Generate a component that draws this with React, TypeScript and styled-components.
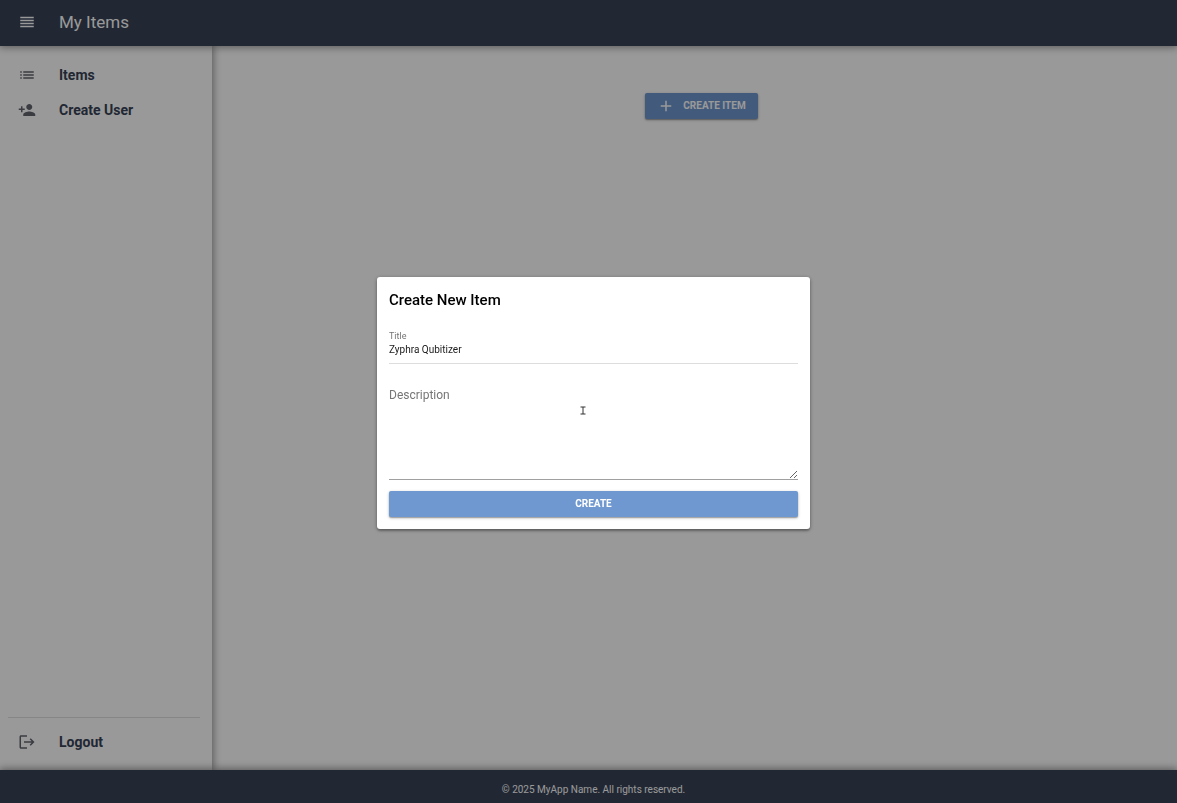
import React, { useState } from "react";
import styled, { createGlobalStyle } from "styled-components";

const GlobalStyle = createGlobalStyle`
  *, *::before, *::after { box-sizing: border-box; }
  body {
    margin: 0;
    font-family: Roboto, "Liberation Sans", sans-serif;
    font-size: 10px;
    color: #000;
    background: #fff;
  }
  button, input, textarea { font-family: inherit; }
`;

const navy = "#374256";
const blue = "#6f98d0";
const barShadow = "0 0 7px 1px rgba(0, 0, 0, 0.3), 0 0 10px rgba(0, 0, 0, 0.2)";

const Page = styled.div`
  display: flex;
  flex-direction: column;
  min-height: 100vh;
`;

const Header = styled.header`
  position: relative;
  z-index: 2;
  display: flex;
  align-items: center;
  gap: 23px;
  height: 46px;
  padding: 0 18px 2px;
  background: ${navy};
  color: #fff;
  box-shadow: ${barShadow};
`;

const IconButton = styled.button`
  display: flex;
  padding: 0;
  border: 0;
  background: none;
  color: inherit;
`;

const AppTitle = styled.h1`
  margin: 0;
  font-size: 17px;
  line-height: 24px;
  font-weight: 400;
`;

const Body = styled.div`
  display: flex;
  flex: 1;
`;

const Drawer = styled.nav`
  display: flex;
  flex-direction: column;
  width: 212px;
  padding: 11px 12px 11px 8px;
  box-shadow: ${barShadow};
`;

const NavLink = styled.a`
  display: flex;
  align-items: center;
  gap: 23px;
  height: 35px;
  padding: 0 10px;
  color: ${navy};
  font-size: 14px;
  line-height: 20px;
  font-weight: 700;
  text-decoration: none;
`;

const DrawerEnd = styled.div`
  margin-top: auto;
  padding-top: 6px;
  border-top: 1px solid #e0e0e0;
`;

const Main = styled.main`
  flex: 1;
  display: flex;
  justify-content: center;
  align-items: flex-start;
  padding: 47px 0 0 14px;
`;

const Button = styled.button<{ $wide?: boolean }>`
  display: flex;
  align-items: center;
  justify-content: center;
  gap: 8px;
  width: ${(p) => (p.$wide ? "100%" : "auto")};
  height: 26px;
  padding: 0 12px;
  border: 0;
  border-radius: 2px;
  background: ${blue};
  color: #fff;
  font-size: 10px;
  line-height: 16px;
  font-weight: 700;
  text-transform: uppercase;
  box-shadow: 0 1px 3px rgba(0, 0, 0, 0.3), 0 1px 1px rgba(0, 0, 0, 0.2);
`;

const Footer = styled.footer`
  position: relative;
  z-index: 2;
  height: 33px;
  padding: 13px 0 0 10px;
  background: ${navy};
  color: #fff;
  font-size: 10px;
  line-height: 14px;
  text-align: center;
  box-shadow: ${barShadow};
`;

const Backdrop = styled.div`
  position: fixed;
  inset: 0;
  z-index: 10;
  display: flex;
  align-items: center;
  justify-content: center;
  padding: 3px 0 0 10px;
  background: rgba(0, 0, 0, 0.4);
`;

const Dialog = styled.form`
  width: 433px;
  max-width: 90%;
  padding: 13px 12px 12px;
  border-radius: 3px;
  background: #fff;
  box-shadow: 0 1px 4px rgba(0, 0, 0, 0.35), 0 2px 2px rgba(0, 0, 0, 0.2);
`;

const DialogTitle = styled.h2`
  margin: 0 0 21px;
  font-size: 15px;
  line-height: 20px;
  font-weight: 500;
`;

const Field = styled.div`
  display: flex;
  flex-direction: column;
`;

const Label = styled.label`
  color: #757575;
  font-size: 9px;
  line-height: 10px;
`;

const Input = styled.input`
  height: 23px;
  margin-bottom: 16px;
  padding: 0 0 6px;
  border: 0;
  border-bottom: 1px solid #ddd;
  outline: 0;
  color: #212121;
  font-size: 10px;
`;

const TextArea = styled.textarea`
  height: 100px;
  margin-bottom: 11px;
  padding: 8px 0 0;
  border: 0;
  border-bottom: 1px solid #a0a0a0;
  outline: 0;
  background: #fff;
  font-size: 12px;
  line-height: 14px;
  resize: vertical;
  &::placeholder { color: #757575; }
`;

const Pointer = styled.svg`
  position: fixed;
  left: 580px;
  top: 406px;
  z-index: 11;
  pointer-events: none;
`;

const Icon = ({ d, color = "currentColor" }: { d: string; color?: string }) => (
  <svg width={18} height={18} viewBox="0 0 24 24" fill={color} aria-hidden="true">
    <path d={d} />
  </svg>
);

const icons = {
  menu: "M3 15h18v-2H3v2zm0 4h18v-2H3v2zm0-8h18V9H3v2zm0-6v2h18V5H3z",
  list: "M3 13h2v-2H3v2zm0 4h2v-2H3v2zm0-8h2V7H3v2zm4 4h14v-2H7v2zm0 4h14v-2H7v2zM7 7v2h14V7H7z",
  addUser: "M15 12c2.21 0 4-1.79 4-4s-1.79-4-4-4-4 1.79-4 4 1.79 4 4 4zm-9-2V7H4v3H1v2h3v3h2v-3h3v-2H6zm9 4c-2.67 0-8 1.34-8 4v2h16v-2c0-2.66-5.33-4-8-4z",
  logout: "M17 7l-1.41 1.41L18.17 11H8v2h10.17l-2.58 2.58L17 17l5-5zM4 5h8V3H4c-1.1 0-2 .9-2 2v14c0 1.1.9 2 2 2h8v-2H4V5z",
  add: "M19 13h-6v6h-2v-6H5v-2h6V5h2v6h6v2z",
};

const iconGrey = "#62656f";

export default function App() {
  const [title, setTitle] = useState("Zyphra Qubitizer");
  const [description, setDescription] = useState("");
  return (
    <>
      <GlobalStyle />
      <Page>
        <Header>
          <IconButton type="button" aria-label="Menu"><Icon d={icons.menu} /></IconButton>
          <AppTitle>My Items</AppTitle>
        </Header>
        <Body>
          <Drawer>
            <NavLink href="#items"><Icon d={icons.list} color={iconGrey} />Items</NavLink>
            <NavLink href="#create-user"><Icon d={icons.addUser} color={iconGrey} />Create User</NavLink>
            <DrawerEnd>
              <NavLink href="#logout"><Icon d={icons.logout} color={iconGrey} />Logout</NavLink>
            </DrawerEnd>
          </Drawer>
          <Main>
            <Button type="button"><Icon d={icons.add} />Create Item</Button>
          </Main>
        </Body>
        <Footer>© 2025 MyApp Name. All rights reserved.</Footer>
      </Page>
      <Backdrop>
        <Dialog role="dialog" aria-labelledby="dialog-title" onSubmit={(e) => e.preventDefault()}>
          <DialogTitle id="dialog-title">Create New Item</DialogTitle>
          <Field>
            <Label htmlFor="title">Title</Label>
            <Input id="title" value={title} onChange={(e) => setTitle(e.target.value)} />
          </Field>
          <Field>
            <TextArea
              aria-label="Description"
              placeholder="Description"
              value={description}
              onChange={(e) => setDescription(e.target.value)}
            />
          </Field>
          <Button type="submit" $wide>Create</Button>
        </Dialog>
      </Backdrop>
      <Pointer width="6" height="9" viewBox="0 0 6 9" fill="none" stroke="#333" aria-hidden="true">
        <path d="M0.500 1H5.500M0.500 8H5.500M3 1V8" />
      </Pointer>
    </>
  );
}
